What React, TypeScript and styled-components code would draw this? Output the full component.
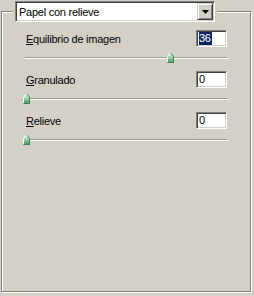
import React from "react";
import styled, { createGlobalStyle } from "styled-components";

const Global = createGlobalStyle`
  html, body { margin: 0; padding: 0; background: #d4d0c8; }
  body { font-family: "Liberation Sans", Arial, sans-serif; font-size: 11px; color: #000; letter-spacing: -0.25px; }
`;

const Page = styled.div`
  width: 254px;
  height: 296px;
  box-sizing: border-box;
  padding: 11px 0 0 1px;
  background: #d4d0c8;
`;

const Group = styled.div`
  width: 250px;
  height: 281px;
  box-sizing: border-box;
  border: 1px solid #808080;
  box-shadow: 1px 1px 0 #ffffff, inset 1px 1px 0 #ffffff;
  display: flex;
  flex-direction: column;
`;

const Legend = styled.div`
  align-self: flex-start;
  margin: -11px 0 0 11px;
  padding: 0 2px;
  background: #d4d0c8;
  display: flex;
`;

const Combo = styled.div`
  width: 200px;
  height: 21px;
  box-sizing: border-box;
  background: #fff;
  border-style: solid;
  border-width: 1px;
  border-color: #808080 #ffffff #ffffff #808080;
  box-shadow: inset 1px 1px 0 #404040, inset -1px -1px 0 #d4d0c8;
  display: flex;
  align-items: center;
  padding: 0 1px 0 3px;
`;

const ComboText = styled.span`
  flex: 1;
  white-space: nowrap;
`;

const ComboButton = styled.div`
  width: 16px;
  height: 17px;
  box-sizing: border-box;
  background: #d4d0c8;
  border-style: solid;
  border-width: 1px;
  border-color: #d4d0c8 #404040 #404040 #d4d0c8;
  box-shadow: inset 1px 1px 0 #ffffff, inset -1px -1px 0 #808080;
  display: flex;
  align-items: center;
  justify-content: center;
`;

const Sections = styled.div`
  display: flex;
  flex-direction: column;
  padding: 8px 0 0 0;
`;

const Section = styled.div`
  display: flex;
  flex-direction: column;
  padding: 0 22px 0 23px;
  height: 41px;
`;

const Row = styled.div`
  display: flex;
  align-items: center;
  justify-content: space-between;
  height: 17px;
  margin-right: 1px;
`;

const Label = styled.span`
  padding-left: 1px;
  white-space: nowrap;
`;

const Field = styled.div`
  width: 31px;
  height: 17px;
  box-sizing: border-box;
  background: #fff;
  border-style: solid;
  border-width: 1px;
  border-color: #808080 #ffffff #ffffff #808080;
  box-shadow: inset 1px 1px 0 #404040, inset -1px -1px 0 #d4d0c8;
  padding: 1px 0 0 2px;
  display: flex;
  align-items: flex-start;
  line-height: 13px;
`;

const Value = styled.span<{ $selected?: boolean }>`
  background: ${(p) => (p.$selected ? "#0a246a" : "transparent")};
  color: ${(p) => (p.$selected ? "#ffffff" : "#000000")};
  padding: 0 1px 0 0;
`;

const SliderBox = styled.div`
  position: relative;
  height: 11px;
  margin-top: 5px;
`;

const Track = styled.div`
  margin-top: 5px;
  height: 2px;
  box-sizing: border-box;
  border-top: 1px solid #9a9890;
  border-bottom: 1px solid #ffffff;
  border-right: 1px solid #ffffff;
`;

const Thumb = styled.svg`
  position: absolute;
  top: 0;
  width: 7px;
  height: 11px;
`;

const Arrow = () => (
  <svg width="7" height="4" viewBox="0 0 7 4">
    <polygon points="0,0 7,0 3.5,4" fill="#000" />
  </svg>
);

const SliderThumb = ({ left }: { left: number }) => (
  <Thumb viewBox="0 0 7 11" style={{ left }}>
    <defs>
      <linearGradient id="tg" x1="0" y1="0" x2="0" y2="1">
        <stop offset="0" stopColor="#e8f6ec" />
        <stop offset="0.45" stopColor="#a6dab6" />
        <stop offset="1" stopColor="#3c8c58" />
      </linearGradient>
    </defs>
    <polygon points="3.5,0 7,4 7,11 0,11 0,4" fill="url(#tg)" />
    <polyline points="0.5,10.5 0.5,4.2 3.5,0.8" fill="none" stroke="#ffffff" strokeWidth="1" />
    <polyline points="3.5,0.8 6.5,4.2 6.5,10.5 0.5,10.5" fill="none" stroke="#3a8656" strokeWidth="1" />
  </Thumb>
);

type Item = { key: string; rest: string; value: number; selected?: boolean };

const items: Item[] = [
  { key: "E", rest: "quilibrio de imagen", value: 36, selected: true },
  { key: "G", rest: "ranulado", value: 0 },
  { key: "R", rest: "elieve", value: 0 },
];

export default function App() {
  return (
    <Page>
      <Global />
      <Group>
        <Legend>
          <Combo>
            <ComboText>Papel con relieve</ComboText>
            <ComboButton>
              <Arrow />
            </ComboButton>
          </Combo>
        </Legend>
        <Sections>
          {items.map((it) => (
            <Section key={it.key}>
              <Row>
                <Label>
                  <u>{it.key}</u>
                  {it.rest}
                </Label>
                <Field>
                  <Value $selected={it.selected}>{it.value}</Value>
                </Field>
              </Row>
              <SliderBox>
                <Track />
                <SliderThumb left={(it.value / 50) * 200 - 2} />
              </SliderBox>
            </Section>
          ))}
        </Sections>
      </Group>
    </Page>
  );
}
